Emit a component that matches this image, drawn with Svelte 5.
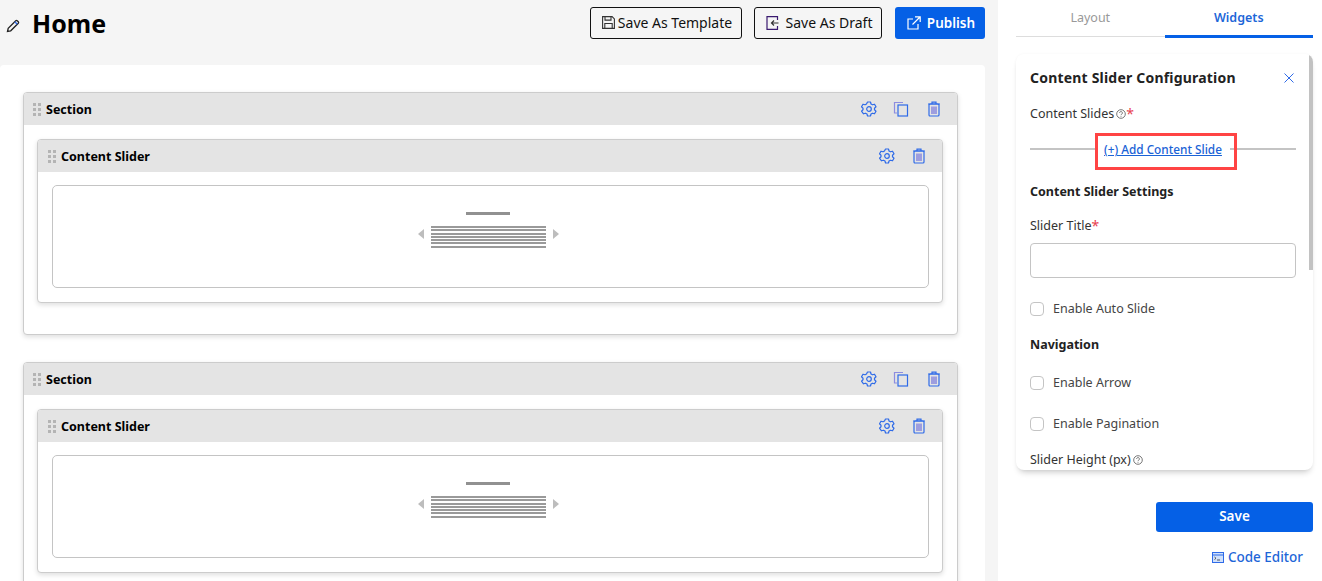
<script>
  const sections = [1, 2];
</script>

{#snippet drag()}
  <svg class="drag" width="9" height="14" viewBox="0 0 9 14" fill="#b4b4b4">
    <rect x="0" y="1" width="3" height="3" /><rect x="5" y="1" width="3" height="3" />
    <rect x="0" y="6" width="3" height="3" /><rect x="5" y="6" width="3" height="3" />
    <rect x="0" y="11" width="3" height="3" /><rect x="5" y="11" width="3" height="3" />
  </svg>
{/snippet}

{#snippet gear()}
  <svg width="16" height="16" viewBox="0 0 16 16" fill="none" stroke="#2f6be8" stroke-width="1.2" stroke-linejoin="round">
    <path d="M6.5 1h3l.5 2 1.5.8 2-.6 1.5 2.6-1.5 1.4v1.6l1.5 1.4-1.5 2.6-2-.6-1.500.8-.5 2h-3l-.5-2-1.500-.8-2 .6L.5 10.200 2 8.800V7.200L.5 5.800 2 3.200l2 .6L5.500 3z" />
    <circle cx="8" cy="8" r="2.300" />
  </svg>
{/snippet}

{#snippet copy()}
  <svg class="copy" width="16" height="16" viewBox="0 0 16 16" fill="none" stroke-width="1.200">
    <path d="M10 1.500H1.500V12H4" stroke="#8d8de0" />
    <rect x="5" y="4" width="9.500" height="11" stroke="#2f6be8" />
  </svg>
{/snippet}

{#snippet trash()}
  <svg width="14" height="16" viewBox="0 0 14 16" fill="none" stroke="#2f6be8" stroke-width="1.200">
    <path d="M1 3h12M5 3V1.200h4V3" />
    <rect x="2" y="3" width="10" height="12" rx="1" />
    <path d="M5 5.500v7.500M7 5.500v7.500M9 5.500v7.500" stroke="#6f6fdc" />
  </svg>
{/snippet}

{#snippet help()}
  <svg class="help" width="10" height="10" viewBox="0 0 10 10" fill="none" stroke="#555" stroke-width=".8">
    <circle cx="5" cy="5" r="4.300" />
    <path d="M3.600 4a1.400 1.400 0 1 1 2.200 1.100c-.5.300-.8.500-.8 1.100M5 7.200v.7" />
  </svg>
{/snippet}

<div class="app">
  <main class="main">
    <header class="top">
      <div class="heading">
        <svg class="pencil" width="14" height="14" viewBox="0 0 14 14" fill="none" stroke="#222" stroke-width="1.300">
          <path d="M1.500 12.500l.7-3.200L9.800 1.700a1 1 0 0 1 1.400 0l1.100 1.100a1 1 0 0 1 0 1.400L4.700 11.800z" />
          <path d="M8.800 2.700l2.500 2.500" stroke="#2f6be8" />
        </svg>
        <h1>Home</h1>
      </div>
      <div class="actions">
        <button class="btn outline template">
          <svg width="13" height="13" viewBox="0 0 13 13" fill="none" stroke="#333" stroke-width="1.100">
            <path d="M.6.600h9.500l2.300 2.300v9.500H.6z" /><path d="M3 .600v3.500h6V.600M2.800 12.400V7.500h7.400v4.900" />
          </svg>
          Save As Template
        </button>
        <button class="btn outline draft">
          <svg width="13" height="14" viewBox="0 0 13 14" fill="none" stroke-width="1.200">
            <path d="M11.500 4V.6H1v12.800h10.500V10" stroke="#3a1a70" /><path d="M12.500 7H5.500M8 4.500L5.500 7 8 9.500" stroke="#333" />
          </svg>
          Save As Draft
        </button>
        <button class="btn primary">
          <svg width="14" height="14" viewBox="0 0 14 14" fill="none" stroke="#fff" stroke-width="1.200">
            <path d="M11 8v5H1V3h5" /><path d="M8 .8h5.200V6M13 1L5.500 8.500" />
          </svg>
          Publish
        </button>
      </div>
    </header>
    <div class="canvas">
      {#each sections as s (s)}
        <section class="section">
          <div class="bar bar-section">
            {@render drag()}
            <span class="bar-title">Section</span>
            <div class="tools">
              {@render gear()}
              {@render copy()}
              {@render trash()}
            </div>
          </div>
          <div class="widget">
            <div class="bar bar-widget">
              {@render drag()}
              <span class="bar-title">Content Slider</span>
              <div class="tools">
                {@render gear()}
                {@render trash()}
              </div>
            </div>
            <div class="preview">
              <div class="slide-title"></div>
              <div class="slide-row">
                <span class="arrow left"></span>
                <div class="lines">
                  {#each [1, 2, 3, 4, 5, 6, 7] as l (l)}<i></i>{/each}
                </div>
                <span class="arrow right"></span>
              </div>
            </div>
          </div>
        </section>
      {/each}
    </div>
  </main>
  <div class="strip"></div>
  <aside class="side">
    <div class="tabs">
      <div class="tab">Layout</div>
      <div class="tab active">Widgets</div>
    </div>
    <div class="card">
      <div class="scrollbar"></div>
      <div class="card-head">
        <h2>Content Slider Configuration</h2>
        <svg width="10" height="10" viewBox="0 0 10 10" stroke="#2f6be8" stroke-width="1"><path d="M.5.500l9 9M9.500.500l-9 9" /></svg>
      </div>
      <div class="label slides-label">Content Slides{@render help()}<b>*</b></div>
      <div class="add-row">
        <a href="#add" class="add">(+) Add Content Slide</a>
        <div class="highlight"></div>
      </div>
      <h3>Content Slider Settings</h3>
      <div class="label title-label">Slider Title<b>*</b></div>
      <div class="input"></div>
      <label class="check auto"><span class="box"></span>Enable Auto Slide</label>
      <h3 class="nav">Navigation</h3>
      <label class="check arrow-check"><span class="box"></span>Enable Arrow</label>
      <label class="check pag"><span class="box"></span>Enable Pagination</label>
      <div class="label height-label">Slider Height (px){@render help()}</div>
    </div>
    <div class="foot">
      <button class="btn primary save">Save</button>
      <a href="#code" class="code">
        <svg width="12" height="11" viewBox="0 0 12 11" fill="none" stroke="#2f6be8"><rect x=".5" y=".5" width="11" height="10" fill="#cfe0fb" /><path d="M.5 3h11" /><path d="M2.500 5l1.500 1.300L2.500 7.500M5 8h3" stroke="#333" stroke-width=".8" /></svg>
        Code Editor
      </a>
    </div>
  </aside>
</div>

<style>
  :global(body) {
    margin: 0;
    background: #fff;
    font-family: "Noto Sans", "Open Sans", sans-serif;
    color: #222;
  }
  .app {
    display: flex;
    height: 581px;
    width: 1322px;
    overflow: hidden;
  }
  .main {
    width: 985px;
    flex: none;
    display: flex;
    flex-direction: column;
    background: #f5f5f5;
  }
  .strip {
    width: 13px;
    flex: none;
    background: #f5f5f5;
  }
  .top {
    height: 65px;
    flex: none;
    display: flex;
    justify-content: space-between;
    align-items: flex-start;
    box-sizing: border-box;
    padding-top: 7px;
  }
  .heading {
    display: flex;
    align-items: center;
    height: 34px;
    padding-left: 6px;
  }
  .pencil {
    margin-top: 3px;
  }
  h1 {
    margin: -2px 0 0 12px;
    font-size: 25px;
    line-height: 34px;
    font-weight: 700;
    color: #000;
  }
  .actions {
    display: flex;
    gap: 12px;
  }
  .btn {
    height: 32px;
    box-sizing: border-box;
    border-radius: 3px;
    font-family: inherit;
    font-size: 14px;
    display: flex;
    align-items: center;
    justify-content: center;
    cursor: pointer;
    padding: 0 0 1px;
  }
  .outline {
    background: transparent;
    border: 1px solid #111;
    color: #111;
  }
  .template {
    width: 152px;
    gap: 3px;
    padding-left: 2px;
  }
  .draft {
    width: 128px;
    gap: 7px;
    padding-left: 2px;
  }
  .primary {
    background: #0560e6;
    border: 0;
    color: #fff;
    font-weight: 600;
    font-size: 13.500px;
  }
  .actions .primary {
    width: 90px;
    gap: 6px;
    margin-left: 1px;
    padding-left: 2px;
  }
  .canvas {
    flex: 1;
    background: #fff;
    border-radius: 4px 4px 0 0;
    padding: 27px 27px 0 23px;
    overflow: hidden;
  }
  .section {
    border: 1px solid #ccc;
    border-radius: 4px;
    box-shadow: 0 2px 5px rgba(0, 0, 0, 0.13);
    padding-bottom: 31px;
    margin-bottom: 27px;
    background: #fff;
  }
  .bar {
    display: flex;
    align-items: center;
    background: #e4e4e4;
    border-radius: 3px 3px 0 0;
    height: 32px;
  }
  .bar-section {
    padding-left: 9px;
  }
  .bar-widget {
    padding-left: 10px;
  }
  .bar-title {
    margin-left: 4px;
    font-size: 12.500px;
    font-weight: 700;
    color: #000;
  }
  .drag {
    flex: none;
  }
  .tools {
    margin-left: auto;
    display: flex;
    align-items: center;
    gap: 17px;
    padding-right: 16px;
  }
  .copy {
    margin: 0 1px 0 -1px;
  }
  .widget {
    margin: 14px 14px 0 13px;
    border: 1px solid #ccc;
    border-radius: 4px;
    box-shadow: 0 2px 5px rgba(0, 0, 0, 0.13);
    padding-bottom: 14px;
    background: #fff;
  }
  .preview {
    margin: 13px 13px 0 14px;
    height: 103px;
    box-sizing: border-box;
    border: 1px solid #c4c4c4;
    border-radius: 5px;
    display: flex;
    flex-direction: column;
    align-items: center;
    padding: 26px 5px 0 0;
  }
  .slide-title {
    width: 44px;
    height: 3px;
    background: #919191;
  }
  .slide-row {
    display: flex;
    align-items: center;
    gap: 7px;
    margin-top: 11px;
  }
  .lines {
    display: flex;
    flex-direction: column;
    gap: 1.300px;
    width: 115px;
  }
  .lines i {
    display: block;
    height: 2px;
    background: #9a9a9a;
  }
  .arrow {
    width: 0;
    height: 0;
    margin-bottom: 6px;
    border-top: 5.500px solid transparent;
    border-bottom: 5.500px solid transparent;
  }
  .arrow.left {
    border-right: 6px solid #bdbdbd;
  }
  .arrow.right {
    border-left: 6px solid #bdbdbd;
  }
  .side {
    width: 297px;
    margin-left: 18px;
    flex: none;
    position: relative;
  }
  .tabs {
    display: flex;
    height: 38px;
    box-sizing: border-box;
    margin-bottom: 16px;
  }
  .tab {
    flex: 1;
    text-align: center;
    font-size: 12.500px;
    line-height: 36px;
    color: #999;
    box-sizing: border-box;
    height: 37px;
    border-bottom: 1px solid #ddd;
  }
  .tab.active {
    color: #1d66d8;
    font-weight: 600;
    height: 38px;
    border-bottom: 3px solid #0560e6;
  }
  .card {
    position: relative;
    height: 416px;
    box-sizing: border-box;
    padding: 0 17px 0 14px;
    border-radius: 8px;
    box-shadow: 0 5px 6px -3px rgba(0, 0, 0, 0.22), 0 0 3px rgba(0, 0, 0, 0.04);
    overflow: hidden;
    background: #fff;
  }
  .scrollbar {
    position: absolute;
    right: 0;
    top: 1px;
    width: 4px;
    height: 215px;
    background: #c2c2c2;
  }
  .card-head {
    display: flex;
    justify-content: space-between;
    align-items: center;
    height: 20px;
    margin-top: 14px;
    padding-right: 2px;
  }
  h2 {
    margin: 0;
    font-size: 14px;
    line-height: 20px;
    font-weight: 700;
    letter-spacing: 0.2px;
    color: #222;
  }
  .label {
    font-size: 12.500px;
    line-height: 18px;
    color: #333;
    display: flex;
    align-items: center;
  }
  .label b {
    color: #e8414f;
    font-weight: 400;
    font-size: 14px;
  }
  .help {
    margin-left: 2px;
  }
  .slides-label {
    margin-top: 17px;
  }
  .add-row {
    position: relative;
    margin-top: 25px;
    height: 2px;
    background: #c4c4c4;
    display: flex;
    justify-content: center;
    align-items: center;
  }
  .add {
    position: relative;
    background: #fff;
    font-size: 11.800px;
    line-height: 18px;
    padding: 0 8px;
    color: #1a62d6;
    text-decoration: underline;
    font-weight: 500;
    white-space: nowrap;
  }
  .highlight {
    position: absolute;
    left: 65px;
    top: -15px;
    width: 142px;
    height: 37px;
    box-sizing: border-box;
    border: 3px solid #f44;
    pointer-events: none;
  }
  h3 {
    margin: 33px 0 0;
    font-size: 12.500px;
    line-height: 18px;
    font-weight: 700;
    color: #222;
  }
  .title-label {
    margin-top: 16px;
  }
  .input {
    margin-top: 8px;
    height: 35px;
    box-sizing: border-box;
    border: 1px solid #c4c4c4;
    border-radius: 4px;
  }
  .check {
    display: flex;
    align-items: center;
    gap: 9px;
    font-size: 12.500px;
    line-height: 18px;
    color: #444;
  }
  .box {
    width: 14px;
    height: 14px;
    box-sizing: border-box;
    border: 1px solid #c4c4c4;
    border-radius: 4px;
    flex: none;
  }
  .auto {
    margin-top: 22px;
  }
  h3.nav {
    margin-top: 18px;
  }
  .arrow-check {
    margin-top: 20px;
  }
  .pag {
    margin-top: 23px;
  }
  .height-label {
    margin-top: 18px;
  }
  .foot {
    display: flex;
    flex-direction: column;
    align-items: flex-end;
  }
  .save {
    margin-top: 32px;
    width: 157px;
    height: 30px;
    padding-bottom: 2px;
  }
  .code {
    margin: 16px 10px 0 0;
    display: flex;
    align-items: center;
    gap: 4px;
    font-size: 13.500px;
    font-weight: 500;
    color: #1d66d8;
    text-decoration: none;
    line-height: 19px;
  }
</style>
